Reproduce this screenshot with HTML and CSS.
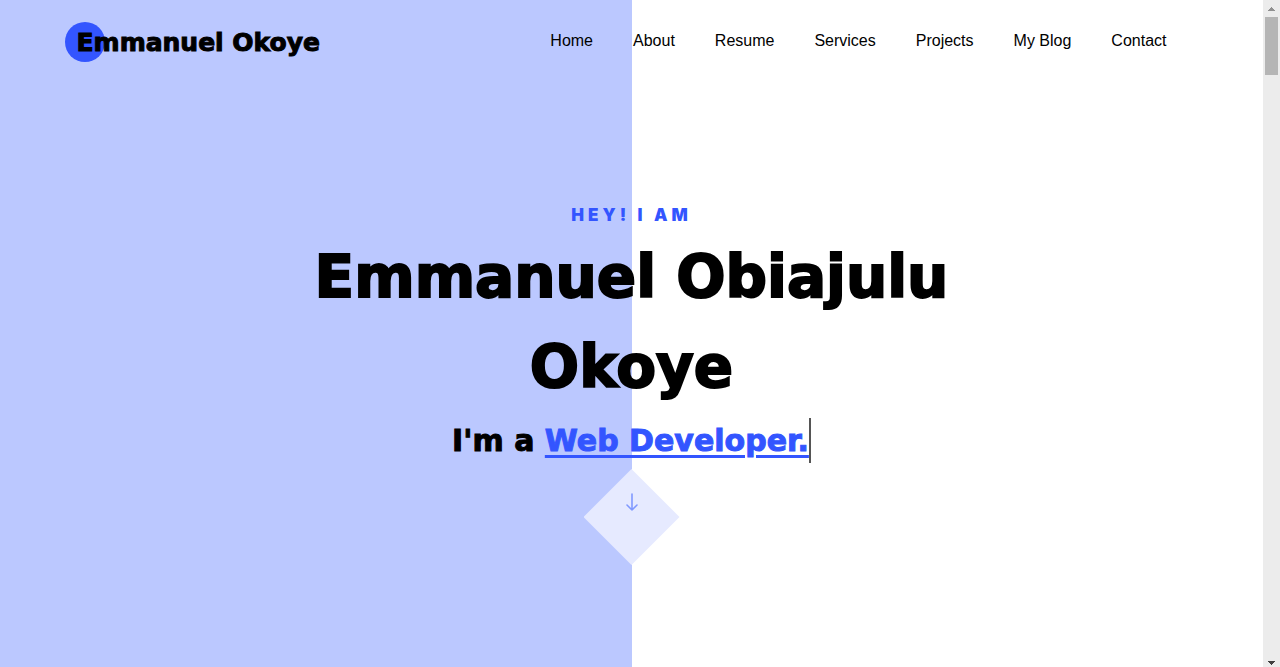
FILE: index.html
```html
<!DOCTYPE html>
<html lang="en">
<head>
<meta charset="utf-8">
<meta name="viewport" content="width=device-width, initial-scale=1">
<title>Emmanuel Okoye</title>
<link rel="stylesheet" href="styles.css">
</head>
<body>
<div class="viewport">
  <div class="page">
    <header class="navbar">
      <a class="brand" href="#home"><span class="brand-text">Emmanuel Okoye</span></a>
      <nav class="links" aria-label="Main">
        <a href="#home">Home</a>
        <a href="#about">About</a>
        <a href="#resume">Resume</a>
        <a href="#services">Services</a>
        <a href="#projects">Projects</a>
        <a href="#blog">My Blog</a>
        <a href="#contact">Contact</a>
      </nav>
    </header>
    <main class="hero" id="home">
      <p class="greeting">Hey! I am</p>
      <h1 class="name">Emmanuel Obiajulu Okoye</h1>
      <h2 class="role">I'm a <a class="typed" href="#services">Web Developer.</a></h2>
      <a class="scroll-down" href="#about" aria-label="Scroll down">
        <svg width="12" height="18" viewBox="0 0 12 18" fill="none" stroke="currentColor" stroke-width="1.6" stroke-linecap="round" stroke-linejoin="round"><path d="M6 1v16M1 12l5 5 5-5"/></svg>
      </a>
    </main>
  </div>
  <div class="scrollbar" aria-hidden="true">
    <svg class="arrow" width="17" height="17" viewBox="0 0 17 17" shape-rendering="crispEdges"><path fill="#909090" d="M8 7h1v1h1v1h1v1h1v1H5v-1h1V9h1V8h1z"/></svg>
    <div class="thumb"></div>
    <svg class="arrow arrow-end" width="17" height="17" viewBox="0 0 17 17" shape-rendering="crispEdges"><path fill="#404040" d="M5 11h7v1h-1v1h-1v1H9v1H8v-1H7v-1H6v-1H5z"/></svg>
  </div>
</div>
</body>
</html>
```
FILE: styles.css
```css
* { box-sizing: border-box; }

body {
  margin: 0;
  font-family: "Liberation Sans", Arial, sans-serif;
  font-size: 16px;
  line-height: 24px;
  color: #000;
  background: #fff;
}

a { color: inherit; text-decoration: none; }

.viewport {
  display: grid;
  grid-template-columns: 1fr 17px;
  min-height: 100vh;
}

.page {
  display: flex;
  flex-direction: column;
  background: linear-gradient(to right, #bbc8ff calc(50% + 1px), #fff calc(50% + 1px));
}

.navbar {
  display: flex;
  align-items: center;
  justify-content: space-between;
  width: 100%;
  max-width: 1140px;
  margin: 0 auto;
  padding: 20px 15px;
}

.brand {
  position: relative;
  font-family: "DejaVu Sans", sans-serif;
  font-size: 25px;
  font-weight: 700;
  line-height: 46px;
  -webkit-text-stroke: 1px currentColor;
}

.brand::before {
  content: "";
  position: absolute;
  top: 2px;
  left: -12px;
  width: 40px;
  height: 40px;
  border-radius: 50%;
  background: #3355ff;
}

.brand-text { position: relative; }

.links { display: flex; }

.links a { padding: 8px 20px 12px; }

.hero {
  display: flex;
  flex: 1;
  flex-direction: column;
  align-items: center;
  justify-content: center;
  width: 100%;
  max-width: 760px;
  margin: 0 auto;
  padding: 14px 15px 0;
  font-family: "DejaVu Sans", sans-serif;
  font-weight: 700;
  text-align: center;
}

.greeting {
  margin: 0 0 4px;
  font-family: Inter, sans-serif;
  font-size: 17px;
  font-weight: 900;
  letter-spacing: 4px;
  line-height: 26px;
  text-transform: uppercase;
  color: #3355ff;
}

.name {
  margin: 0;
  font-size: 58px;
  font-weight: 700;
  line-height: 90px;
  -webkit-text-stroke: 2px currentColor;
}

.role {
  margin: 6px 0;
  font-size: 30px;
  font-weight: 700;
  line-height: 45px;
  -webkit-text-stroke: 1px currentColor;
}

.typed {
  display: inline-block;
  border-right: 2px solid #555;
  color: #3355ff;
  text-decoration: underline;
  text-decoration-thickness: 3px;
  text-underline-offset: 4px;
}

.scroll-down {
  display: flex;
  justify-content: center;
  width: 96px;
  height: 96px;
  padding-top: 24px;
  clip-path: polygon(50% 0, 100% 50%, 50% 100%, 0 50%);
  background: #e6eaff;
  color: #8099ff;
}

.scrollbar {
  display: flex;
  flex-direction: column;
  background: #ececec;
}

.arrow { display: block; }

.arrow-end { margin-top: auto; }

.thumb {
  height: 58px;
  margin: 0 2px;
  background: #b5b5b5;
}
```
